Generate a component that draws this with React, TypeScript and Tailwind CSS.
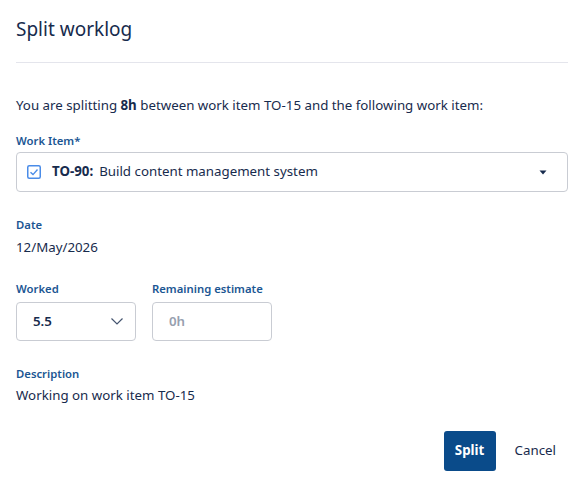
import React from "react";

export default function App() {
  const font = { fontFamily: '"Noto Sans", "Open Sans", sans-serif' };
  const label = "text-[11.3px] leading-[16px] font-semibold text-[#1b5693]";
  return (
    <div className="w-[579px] h-[488px] bg-white text-[#172b4d] overflow-hidden" style={font}>
      <div className="px-4 pt-[15px]">
        <h1 className="text-[19px] leading-[28px] font-normal">Split worklog</h1>
        <div className="mt-[19px] h-px bg-[#e4e5ec] w-[552px]" />
        <p className="mt-[31px] text-[13.3px] leading-[22px]">
          You are splitting <b className="font-bold">8h</b> between work item TO-15 and the following work item:
        </p>
        <div className={`mt-[17px] ${label}`}>Work Item*</div>
        <div className="mt-[3px] w-[552px] h-[40px] border border-[#c9ccd3] rounded-[4px] flex items-center px-[10px]">
          <svg width="14" height="14" viewBox="0 0 14 14" className="shrink-0">
            <rect x="0.75" y="0.75" width="12.5" height="12.5" rx="1.5" fill="white" stroke="#4a8ce8" strokeWidth="1.5" />
            <path d="M3.5 7.2 L6 9.6 L10.5 4.5" fill="none" stroke="#4a8ce8" strokeWidth="1.4" />
          </svg>
          <span className="ml-[11px] text-[13.3px] font-bold">TO-90:</span>
          <span className="ml-[6px] text-[13.3px]">Build content management system</span>
          <svg width="8" height="5" viewBox="0 0 8 5" className="ml-auto mr-[10px]">
            <path d="M0.5 0.5 L7.5 0.5 L4 4.5 Z" fill="#172b4d" />
          </svg>
        </div>
        <div className={`mt-[25px] ${label}`}>Date</div>
        <div className="mt-[4px] text-[13.3px] leading-[20px]">12/May/2026</div>
        <div className="mt-[24px] flex gap-[16px]">
          <div>
            <div className={label}>Worked</div>
            <div className="mt-[5px] w-[120px] h-[39px] border border-[#c9ccd3] rounded-[4px] flex items-center pl-[16px] pr-[12px]">
              <span className="text-[13.3px] font-semibold">5.5</span>
              <svg width="12" height="7" viewBox="0 0 12 7" className="ml-auto">
                <path d="M0.5 0.5 L6 6 L11.5 0.5" fill="none" stroke="#44546f" strokeWidth="1.2" />
              </svg>
            </div>
          </div>
          <div>
            <div className={label}>Remaining estimate</div>
            <div className="mt-[5px] w-[120px] h-[39px] border border-[#c9ccd3] rounded-[4px] flex items-center pl-[16px]">
              <span className="text-[13.3px] font-semibold text-[#97a0af]">0h</span>
            </div>
          </div>
        </div>
        <div className={`mt-[25px] ${label}`}>Description</div>
        <div className="mt-[3px] text-[13.3px] leading-[20px]">Working on work item TO-15</div>
        <div className="mt-[26px] flex justify-end items-center mr-[-1px]">
          <button className="h-[40px] w-[52px] rounded-[3px] bg-[#0a4b8a] text-white text-[13.3px] font-bold">Split</button>
          <button className="ml-[11px] h-[40px] px-[8px] text-[13.3px] text-[#172b4d]">Cancel</button>
        </div>
      </div>
    </div>
  );
}
